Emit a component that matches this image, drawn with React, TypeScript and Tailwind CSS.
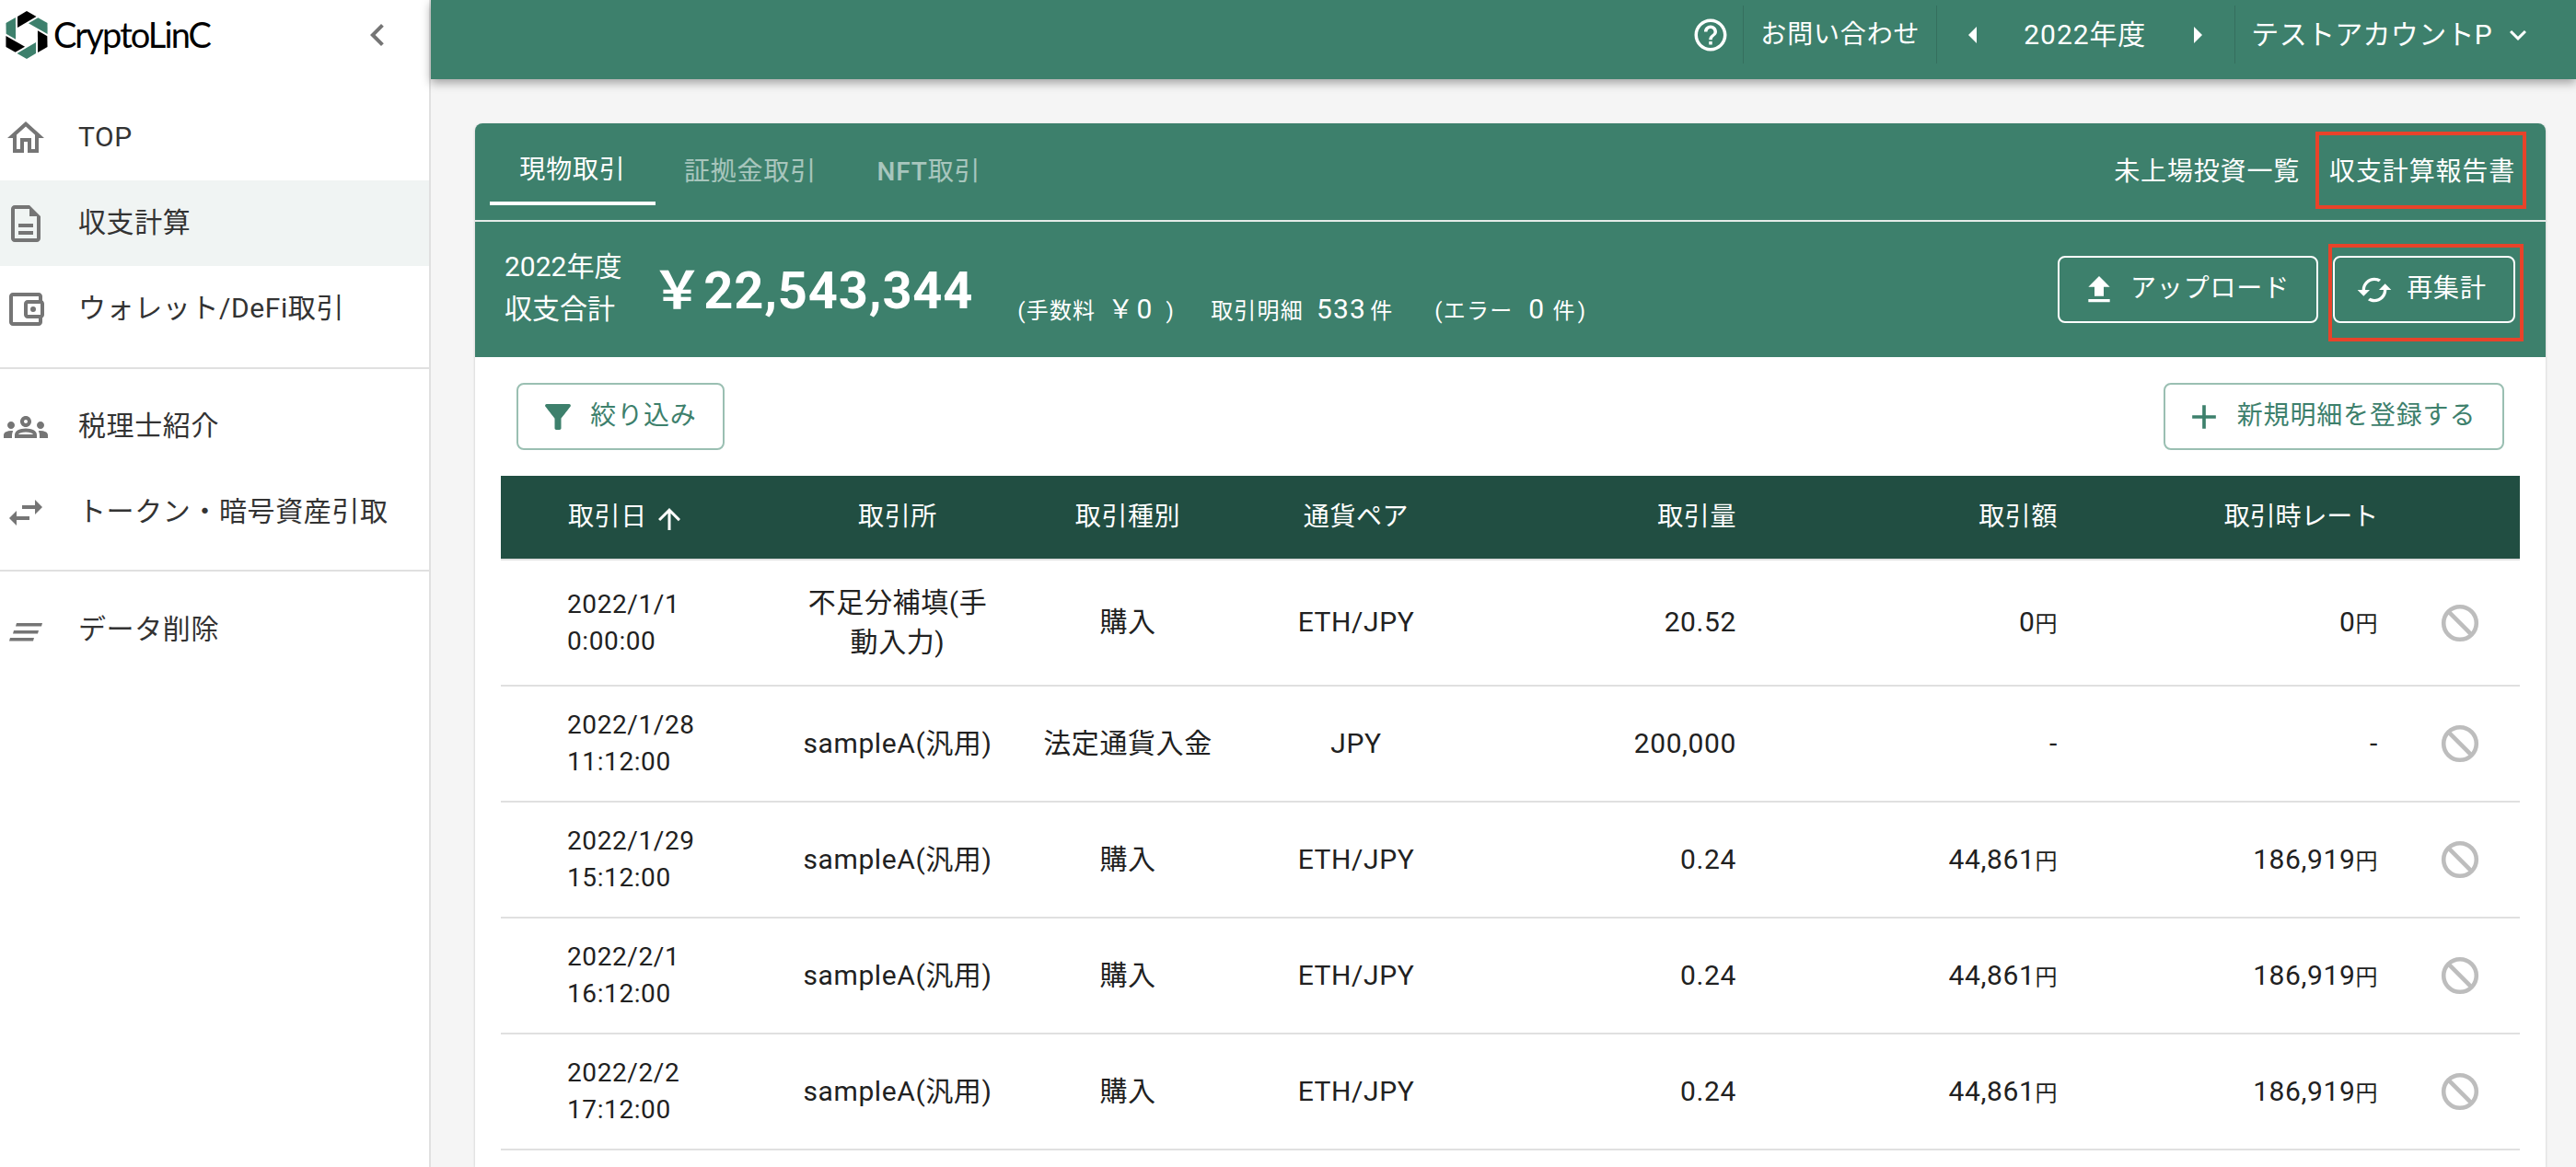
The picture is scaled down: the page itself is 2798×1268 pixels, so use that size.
const rows = [
  { date: '2022/1/1', time: '0:00:00', place: '不足分補填(手動入力)', kind: '購入', pair: 'ETH/JPY', qty: '20.52', amount: '0', rate: '0', tall: true },
  { date: '2022/1/28', time: '11:12:00', place: 'sampleA(汎用)', kind: '法定通貨入金', pair: 'JPY', qty: '200,000', amount: '-', rate: '-' },
  { date: '2022/1/29', time: '15:12:00', place: 'sampleA(汎用)', kind: '購入', pair: 'ETH/JPY', qty: '0.24', amount: '44,861', rate: '186,919' },
  { date: '2022/2/1', time: '16:12:00', place: 'sampleA(汎用)', kind: '購入', pair: 'ETH/JPY', qty: '0.24', amount: '44,861', rate: '186,919' },
  { date: '2022/2/2', time: '17:12:00', place: 'sampleA(汎用)', kind: '購入', pair: 'ETH/JPY', qty: '0.24', amount: '44,861', rate: '186,919' },
];

function Icon({ d, className }: { d: string; className: string }) {
  return (
    <svg viewBox="0 0 24 24" fill="currentColor" className={className}>
      <path d={d} />
    </svg>
  );
}

const paths = {
  home: 'm12 5.69 5 4.5V18h-2v-6H9v6H7v-7.81l5-4.5M12 3 2 12h3v8h6v-6h2v6h6v-8h3L12 3z',
  doc: 'M8 16h8v2H8zm0-4h8v2H8zm6-10H6c-1.1 0-2 .9-2 2v16c0 1.1.89 2 1.99 2H18c1.1 0 2-.9 2-2V8l-6-6zm4 18H6V4h8v4h4v12z',
  wallet: 'M21 7.28V5c0-1.1-.9-2-2-2H5c-1.11 0-2 .9-2 2v14c0 1.1.89 2 2 2h14c1.1 0 2-.9 2-2v-2.28c.59-.35 1-.98 1-1.72V9c0-.74-.41-1.37-1-1.72zM20 9v6h-7V9h7zM5 19V5h14v2h-6c-1.1 0-2 .9-2 2v6c0 1.1.9 2 2 2h6v2H5zm11-5.5a1.5 1.5 0 1 0 0-3 1.5 1.5 0 0 0 0 3z',
  groups: 'M4 13c1.1 0 2-.9 2-2s-.9-2-2-2-2 .9-2 2 .9 2 2 2zm1.13 1.1c-.37-.06-.74-.1-1.13-.1-.99 0-1.93.21-2.78.58C.48 14.9 0 15.62 0 16.43V18h4.5v-1.61c0-.83.23-1.61.63-2.29zM20 13c1.1 0 2-.9 2-2s-.9-2-2-2-2 .9-2 2 .9 2 2 2zm4 3.43c0-.81-.48-1.53-1.22-1.85-.85-.37-1.79-.58-2.78-.58-.39 0-.76.04-1.13.1.4.68.63 1.46.63 2.29V18H24v-1.57zm-7.76-2.78c-1.17-.52-2.61-.9-4.24-.9-1.63 0-3.07.39-4.24.9C6.68 14.13 6 15.21 6 16.39V18h12v-1.61c0-1.18-.68-2.26-1.76-2.74zM8.07 16c.09-.23.13-.39.91-.69.97-.38 1.99-.56 3.02-.56s2.05.18 3.02.56c.77.3.81.46.91.69H8.07zM12 8c.55 0 1 .45 1 1s-.45 1-1 1-1-.45-1-1 .45-1 1-1m0-2c-1.66 0-3 1.34-3 3s1.34 3 3 3 3-1.34 3-3-1.34-3-3-3z',
  swap: 'M6.99 11 3 15l3.99 4v-3H14v-2H6.99v-3zM21 9l-3.99-4v3H10v2h7.01v3L21 9z',
  chevronLeft: 'M15.41 7.41 14 6l-6 6 6 6 1.41-1.41L10.83 12z',
  help: 'M11 18h2v-2h-2v2zm1-16C6.48 2 2 6.48 2 12s4.48 10 10 10 10-4.48 10-10S17.52 2 12 2zm0 18c-4.41 0-8-3.59-8-8s3.59-8 8-8 8 3.59 8 8-3.59 8-8 8zm0-14c-2.21 0-4 1.79-4 4h2c0-1.1.9-2 2-2s2 .9 2 2c0 2-3 1.75-3 5h2c0-2.25 3-2.5 3-5 0-2.21-1.79-4-4-4z',
  chevronDown: 'M7.41 8.59 12 13.17l4.59-4.58L18 10l-6 6-6-6 1.41-1.41z',
  upload: 'M9 16h6v-6h4l-7-7-7 7h4zm-4 2h14v2H5z',
  cached: 'm19 8-4 4h3c0 3.31-2.69 6-6 6-1.01 0-1.97-.25-2.8-.7l-1.46 1.46C8.97 19.54 10.43 20 12 20c4.42 0 8-3.58 8-8h3l-4-4zM6 12c0-3.31 2.69-6 6-6 1.01 0 1.97.25 2.8.7l1.46-1.46C15.03 4.46 13.57 4 12 4c-4.42 0-8 3.58-8 8H1l4 4 4-4H6z',
  filter: 'M4.25 5.61C6.27 8.2 10 13 10 13v6c0 .55.45 1 1 1h2c.55 0 1-.45 1-1v-6s3.72-4.8 5.74-7.39c.51-.66.04-1.61-.79-1.61H5.04c-.83 0-1.3.95-.79 1.61z',
  plus: 'M19 13h-6v6h-2v-6H5v-2h6V5h2v6h6v2z',
  arrowUp: 'M4 12l1.41 1.41L11 7.83V20h2V7.83l5.58 5.59L20 12l-8-8-8 8z',
};

// six shards of the hexagon, same shape turned by 60deg each
function Logo() {
  const shard = '23,0 33.5,6 13,18 13,6';
  return (
    <svg viewBox="0 0 46 52" className="w-[46px] h-[52px] shrink-0">
      {[0, 60, 120, 180, 240, 300].map((deg, i) => (
        <polygon key={deg} points={shard} fill={i % 2 === 0 ? '#000000' : '#3d806c'} transform={`rotate(${deg} 23 26)`} />
      ))}
    </svg>
  );
}

function BlockIcon() {
  return (
    <svg viewBox="0 0 24 24" fill="none" stroke="#bdbdbd" strokeWidth="2.3" className="w-12 h-12">
      <circle cx="12" cy="12" r="8.9" />
      <path d="M5.7 5.7l12.6 12.6" />
    </svg>
  );
}

function NavItem({ icon, label, active }: { icon: React.ReactNode; label: string; active?: boolean }) {
  return (
    <div className={`flex items-center h-[93px] pl-1 ${active ? 'bg-[#f0f4f3]' : ''}`}>
      <div className="w-12 h-12 text-[#757575] shrink-0 flex items-center justify-center">{icon}</div>
      <span className="ml-[33px] -mt-[2px] text-[30px] tracking-[0.02em] text-[#333333]">{label}</span>
    </div>
  );
}

function Sidebar() {
  return (
    <aside className="w-[468px] shrink-0 h-full bg-white border-r-2 border-[#e0e0e0]">
      <div className="h-[86px] flex items-start pt-3 pl-1.5 relative">
        <Logo />
        <span className="ml-1.5 mt-[5px] text-[38px] leading-[40px] tracking-[-0.05em] font-['Lato',sans-serif] text-black">CryptoLinC</span>
        <Icon d={paths.chevronLeft} className="absolute left-[386px] top-[14px] w-12 h-12 text-[#757575]" />
      </div>
      <div className="py-[17px] border-b-2 border-[#e0e0e0]">
        <NavItem label="TOP" icon={<Icon d={paths.home} className="w-12 h-12" />} />
        <NavItem label="収支計算" active icon={<Icon d={paths.doc} className="w-12 h-12" />} />
        <NavItem label="ウォレット/DeFi取引" icon={<Icon d={paths.wallet} className="w-12 h-12" />} />
      </div>
      <div className="py-4 border-b-2 border-[#e0e0e0]">
        <NavItem label="税理士紹介" icon={<Icon d={paths.groups} className="w-12 h-12" />} />
        <NavItem label="トークン・暗号資産引取" icon={<Icon d={paths.swap} className="w-12 h-12" />} />
      </div>
      <div className="pt-[17px]">
        <NavItem
          label="データ削除"
          icon={
            <svg viewBox="0 0 48 48" fill="currentColor" className="w-12 h-12">
              <path d="M14 16h28l-1 3.5H13zM11 24h27l-1 3.5H10zM7 32h26l-1 3.5H6z" />
            </svg>
          }
        />
      </div>
    </aside>
  );
}

function TopBar() {
  return (
    <header className="h-[86px] shrink-0 bg-[#3d806c] shadow-[0_4px_10px_rgba(0,0,0,0.35)] text-white flex items-start justify-end pr-[45px] relative z-10 text-[28px] tracking-[0.03em]">
      <div className="h-[63px] mt-1.5 flex items-center">
        <Icon d={paths.help} className="w-[42px] h-[42px]" />
      </div>
      <div className="h-[63px] mt-1.5 ml-[14px] pl-[18px] pr-[18px] border-l border-[#356f5e] flex items-center">お問い合わせ</div>
      <div className="h-[63px] mt-1.5 w-[325px] border-x border-[#356f5e] flex items-center relative">
        <span className="absolute left-[34px] top-[23px] w-0 h-0 border-y-[9px] border-y-transparent border-r-[9px] border-r-white" />
        <span className="absolute left-[94px] text-[30px] tracking-[0.03em]">2022年度</span>
        <span className="absolute left-[279px] top-[23px] w-0 h-0 border-y-[9px] border-y-transparent border-l-[9px] border-l-white" />
      </div>
      <div className="h-[63px] mt-1.5 pl-[17px] flex items-center text-[30px] tracking-[0.01em]">
        テストアカウントP
        <Icon d={paths.chevronDown} className="w-9 h-9 ml-[10px]" />
      </div>
    </header>
  );
}

function OutlineButton({ icon, label, className }: { icon: React.ReactNode; label: string; className: string }) {
  return (
    <div className={`h-[73px] flex items-center justify-center rounded-lg border-2 text-[28px] tracking-[0.03em] ${className}`}>
      {icon}
      <span className="-mt-[2px]">{label}</span>
    </div>
  );
}

function Yen({ value }: { value: string }) {
  if (value === '-') return <span>-</span>;
  return (
    <span>
      {value}
      <span className="text-[24px]">円</span>
    </span>
  );
}

const gridCols = 'grid grid-cols-[296px_270px_230px_266px_296px_347px_348px_139px] items-center';

function DataTable() {
  return (
    <div className="mx-[28px] mt-[28px] text-[30px] tracking-[0.02em] text-[#212121]">
      <div className={`${gridCols} h-[92px] bg-[#214e42] border-b-2 border-[#e0e0e0] text-white text-[28px]`}>
        <div className="pl-[73px] flex items-center">
          取引日
          <Icon d={paths.arrowUp} className="w-9 h-9 ml-[6px] mt-1" />
        </div>
        <div className="text-center">取引所</div>
        <div className="text-center">取引種別</div>
        <div className="text-center">通貨ペア</div>
        <div className="text-right pr-4">取引量</div>
        <div className="text-right pr-[14px]">取引額</div>
        <div className="text-right pr-[14px] tracking-[-0.005em]">取引時レート</div>
        <div />
      </div>
      {rows.map((row) => (
        <div key={row.date} className={`${gridCols} border-b-2 border-[#e0e0e0] ${row.tall ? 'h-[137px]' : 'h-[126px]'}`}>
          <div className="pl-[72px] leading-[40px] text-[28px]">
            {row.date}
            <br />
            {row.time}
          </div>
          <div className="text-center leading-[43px] px-[30px] pb-[2px]">{row.place}</div>
          <div className="text-center pb-[2px]">{row.kind}</div>
          <div className="text-center pb-[2px]">{row.pair}</div>
          <div className="text-right pr-4 pb-[2px]">{row.qty}</div>
          <div className="text-right pr-[14px] pb-[2px]"><Yen value={row.amount} /></div>
          <div className="text-right pr-[14px] pb-[2px]"><Yen value={row.rate} /></div>
          <div className="pl-[51px]">
            <BlockIcon />
          </div>
        </div>
      ))}
    </div>
  );
}

function Card() {
  return (
    <div className="flex-1 ml-[48px] mr-[33px] mt-[48px] rounded-t-lg bg-white shadow-[0_1px_3px_rgba(0,0,0,0.2)]">
      <div className="bg-[#3d806c] rounded-t-lg text-white">
        <div className="h-[107px] border-b-2 border-[#e4ebe8] flex items-start relative text-[28px] tracking-[0.03em]">
          <div className="ml-4 w-[180px] h-[89px] border-b-4 border-white flex items-center justify-center pt-[17px]">現物取引</div>
          <div className="w-[206px] h-[89px] flex items-center justify-center pt-[17px] text-white/55">証拠金取引</div>
          <div className="w-[182px] h-[89px] flex items-center justify-center pt-[17px] text-white/55">
            <span className="font-medium">NFT</span>取引
          </div>
          <div className="ml-auto h-[89px] pr-[33px] flex items-center gap-[32px] pt-[17px]">
            <span>未上場投資一覧</span>
            <span className="relative">
              収支計算報告書
              <span className="absolute -left-[15px] -right-[12px] -top-[23px] -bottom-[19px] border-4 border-[#e8432a]" />
            </span>
          </div>
        </div>
        <div className="h-[147px] flex items-start relative">
          <div className="ml-8 mt-[26px] text-[30px] leading-[46px] tracking-normal">
            2022年度
            <br />
            収支合計
          </div>
          <div className="ml-[32px] mt-[39px] text-[56px] leading-[72px] font-bold tracking-[0.015em]">￥22,543,344</div>
          <div className="ml-[48px] mt-[77px] flex items-baseline text-[24px] tracking-[0.05em] leading-[36px]">
            <span>(手数料</span>
            <span className="ml-[13px] text-[28px]">￥</span>
            <span className="ml-[2px] text-[30px]">0</span>
            <span className="ml-[14px]">)</span>
            <span className="ml-[39px]">取引明細</span>
            <span className="ml-[14px] text-[30px]">533</span>
            <span className="ml-[4px]">件</span>
            <span className="ml-[45px]">(エラー</span>
            <span className="ml-[17px] text-[30px]">0</span>
            <span className="ml-[8px]">件</span>
            <span className="ml-[2px]">)</span>
          </div>
          <div className="ml-auto mt-[37px] mr-[33px] flex gap-4">
            <OutlineButton
              label="アップロード"
              className="w-[283px] border-white text-white pr-[6px]"
              icon={<Icon d={paths.upload} className="w-10 h-10 mr-[14px]" />}
            />
            <div className="relative">
              <OutlineButton
                label="再集計"
                className="w-[198px] border-white text-white pr-[6px]"
                icon={<Icon d={paths.cached} className="w-10 h-10 mr-[15px]" />}
              />
              <span className="absolute -left-[5px] right-[-9px] -top-[13px] -bottom-[20px] border-4 border-[#e8432a]" />
            </div>
          </div>
        </div>
      </div>
      <div className="px-[45px] pt-[28px] flex justify-between">
        <OutlineButton
          label="絞り込み"
          className="w-[226px] border-[#9abfb2] text-[#3d806c] pr-[6px]"
          icon={<Icon d={paths.filter} className="w-[42px] h-[42px] mr-[14px]" />}
        />
        <OutlineButton
          label="新規明細を登録する"
          className="w-[370px] border-[#9abfb2] text-[#3d806c] pr-[9px]"
          icon={<Icon d={paths.plus} className="w-11 h-11 mr-[14px]" />}
        />
      </div>
      <DataTable />
    </div>
  );
}

export default function App() {
  return (
    <div className="w-[2798px] h-[1268px] overflow-hidden flex bg-[#f5f5f5] font-['Roboto','Noto_Sans_CJK_JP',sans-serif]">
      <Sidebar />
      <main className="flex-1 min-w-0 flex flex-col">
        <TopBar />
        <Card />
      </main>
    </div>
  );
}
